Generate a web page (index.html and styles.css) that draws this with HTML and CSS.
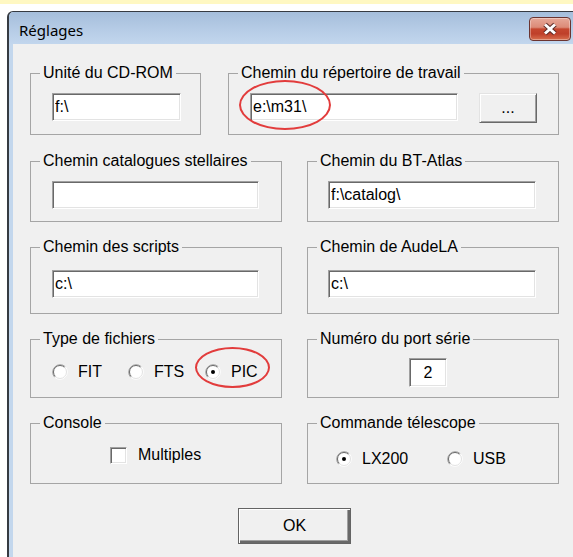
FILE: index.html
```html
<!DOCTYPE html>
<html lang="fr">
<head>
<meta charset="utf-8">
<title>Réglages</title>
<link rel="stylesheet" href="styles.css">
</head>
<body>
<div class="band"></div>
<div class="window">
  <div class="titlebar">
    <span class="title">Réglages</span>
    <button class="close" type="button" aria-label="Fermer">
      <svg width="18" height="14" viewBox="0 0 18 14" aria-hidden="true">
        <path d="M4 2.5L14 11.5M14 2.5L4 11.5" stroke="#5b2b27" stroke-width="5" fill="none"/>
        <path d="M4 2.5L14 11.5M14 2.5L4 11.5" stroke="#fff" stroke-width="3" fill="none"/>
      </svg>
    </button>
  </div>
  <div class="frame">
    <form class="panel">
      <div class="row-top">
        <fieldset class="group">
          <legend>Unité du CD-ROM</legend>
          <div class="body">
            <input class="field w-cd" value="f:\">
          </div>
        </fieldset>
        <fieldset class="group">
          <legend>Chemin du répertoire de travail</legend>
          <div class="body line">
            <input class="field w-work" value="e:\m31\">
            <button class="btn browse" type="button">...</button>
            <span class="mark mark-work"></span>
          </div>
        </fieldset>
      </div>

      <fieldset class="group">
        <legend>Chemin catalogues stellaires</legend>
        <div class="body">
          <input class="field w-left" value="">
        </div>
      </fieldset>
      <fieldset class="group">
        <legend>Chemin du BT-Atlas</legend>
        <div class="body pad-right">
          <input class="field w-right" value="f:\catalog\">
        </div>
      </fieldset>

      <fieldset class="group">
        <legend>Chemin des scripts</legend>
        <div class="body pad-r3">
          <input class="field w-left" value="c:\">
        </div>
      </fieldset>
      <fieldset class="group">
        <legend>Chemin de AudeLA</legend>
        <div class="body pad-right pad-r3">
          <input class="field w-right" value="c:\">
        </div>
      </fieldset>

      <fieldset class="group">
        <legend>Type de fichiers</legend>
        <div class="body opts types">
          <label class="opt">
            <svg class="radio" viewBox="0 0 16 16" aria-hidden="true">
              <circle cx="8" cy="8" r="7" fill="#fff"/>
              <path d="M2.7 13.3A7.5 7.5 0 0 1 13.3 2.7" fill="none" stroke="#a0a0a0"/>
              <path d="M13.3 2.7A7.5 7.5 0 0 1 2.7 13.3" fill="none" stroke="#fff"/>
              <path d="M3.4 12.6A6.5 6.5 0 0 1 12.6 3.4" fill="none" stroke="#696969"/>
              <path d="M12.6 3.4A6.5 6.5 0 0 1 3.4 12.6" fill="none" stroke="#e3e3e3"/>
            </svg>
            <span>FIT</span>
          </label>
          <label class="opt">
            <svg class="radio" viewBox="0 0 16 16" aria-hidden="true">
              <circle cx="8" cy="8" r="7" fill="#fff"/>
              <path d="M2.7 13.3A7.5 7.5 0 0 1 13.3 2.7" fill="none" stroke="#a0a0a0"/>
              <path d="M13.3 2.7A7.5 7.5 0 0 1 2.7 13.3" fill="none" stroke="#fff"/>
              <path d="M3.4 12.6A6.5 6.5 0 0 1 12.6 3.4" fill="none" stroke="#696969"/>
              <path d="M12.6 3.4A6.5 6.5 0 0 1 3.4 12.6" fill="none" stroke="#e3e3e3"/>
            </svg>
            <span>FTS</span>
          </label>
          <label class="opt">
            <svg class="radio" viewBox="0 0 16 16" aria-hidden="true">
              <circle cx="8" cy="8" r="7" fill="#fff"/>
              <path d="M2.7 13.3A7.5 7.5 0 0 1 13.3 2.7" fill="none" stroke="#a0a0a0"/>
              <path d="M13.3 2.7A7.5 7.5 0 0 1 2.7 13.3" fill="none" stroke="#fff"/>
              <path d="M3.4 12.6A6.5 6.5 0 0 1 12.6 3.4" fill="none" stroke="#696969"/>
              <path d="M12.6 3.4A6.5 6.5 0 0 1 3.4 12.6" fill="none" stroke="#e3e3e3"/>
              <circle cx="8" cy="8" r="2" fill="#000"/>
            </svg>
            <span>PIC</span>
          </label>
          <span class="mark mark-pic"></span>
        </div>
      </fieldset>
      <fieldset class="group">
        <legend>Numéro du port série</legend>
        <div class="body port">
          <input class="field w-port" value="2">
        </div>
      </fieldset>

      <fieldset class="group">
        <legend>Console</legend>
        <div class="body opts console">
          <label class="opt">
            <span class="check"></span>
            <span>Multiples</span>
          </label>
        </div>
      </fieldset>
      <fieldset class="group">
        <legend>Commande télescope</legend>
        <div class="body opts scope">
          <label class="opt">
            <svg class="radio" viewBox="0 0 16 16" aria-hidden="true">
              <circle cx="8" cy="8" r="7" fill="#fff"/>
              <path d="M2.7 13.3A7.5 7.5 0 0 1 13.3 2.7" fill="none" stroke="#a0a0a0"/>
              <path d="M13.3 2.7A7.5 7.5 0 0 1 2.7 13.3" fill="none" stroke="#fff"/>
              <path d="M3.4 12.6A6.5 6.5 0 0 1 12.6 3.4" fill="none" stroke="#696969"/>
              <path d="M12.6 3.4A6.5 6.5 0 0 1 3.4 12.6" fill="none" stroke="#e3e3e3"/>
              <circle cx="8" cy="8" r="2" fill="#000"/>
            </svg>
            <span>LX200</span>
          </label>
          <label class="opt">
            <svg class="radio" viewBox="0 0 16 16" aria-hidden="true">
              <circle cx="8" cy="8" r="7" fill="#fff"/>
              <path d="M2.7 13.3A7.5 7.5 0 0 1 13.3 2.7" fill="none" stroke="#a0a0a0"/>
              <path d="M13.3 2.7A7.5 7.5 0 0 1 2.7 13.3" fill="none" stroke="#fff"/>
              <path d="M3.4 12.6A6.5 6.5 0 0 1 12.6 3.4" fill="none" stroke="#696969"/>
              <path d="M12.6 3.4A6.5 6.5 0 0 1 3.4 12.6" fill="none" stroke="#e3e3e3"/>
            </svg>
            <span>USB</span>
          </label>
        </div>
      </fieldset>

      <button class="btn ok" type="button">OK</button>
    </form>
  </div>
</div>
</body>
</html>
```
FILE: styles.css
```css
html, body {
  margin: 0;
  overflow: hidden;
}

body {
  width: 573px;
  height: 557px;
  background: #fff;
  font-family: "Liberation Sans", Arial, sans-serif;
  font-size: 16px;
  color: #000;
}

/* pale strip along the top edge */
.band {
  height: 4px;
  background: #fff8c2;
}

/* dialog window */
.window {
  margin: 7px 0 0 7px;
  width: 572px;
  height: 560px;
  border-left: 2px solid #363b42;
  border-top: 1px solid #363b42;
  border-top-left-radius: 6px;
  background: #c3d7ed;
  display: flex;
  flex-direction: column;
}

.titlebar {
  height: 32px;
  flex: none;
  display: flex;
  justify-content: space-between;
  align-items: flex-start;
  background: linear-gradient(#a5bedb, #b6cce6 55%, #c2d6ed);
  border-top-left-radius: 5px;
}

.title {
  font-family: "Noto Sans", "Segoe UI", sans-serif;
  font-size: 15px;
  line-height: 20px;
  padding: 8px 0 0 10px;
  color: #000;
}

.close {
  box-sizing: border-box;
  width: 42px;
  height: 24px;
  margin: 5px 10px 0 0;
  padding: 0;
  display: flex;
  align-items: center;
  justify-content: center;
  border: 1px solid #6b3430;
  border-radius: 4px;
  background: linear-gradient(#e6a898 0%, #dc8b78 42%, #c5472f 50%, #bf3f2a 72%, #d8704f 100%);
  box-shadow: inset 0 0 0 1px rgba(255, 255, 255, 0.35);
}

.frame {
  flex: 1;
  padding-left: 4px;
  display: flex;
}

/* client area: two columns of group boxes */
.panel {
  flex: 1;
  background: #f0f0f0;
  padding: 20px 0 0 17px;
  display: grid;
  grid-template-columns: 252px 252px;
  grid-template-rows: 72px 70px 76px 68px 70px auto;
  column-gap: 25px;
  row-gap: 16px;
  align-content: start;
}

.row-top {
  grid-column: 1 / -1;
  display: grid;
  grid-template-columns: 171px 331px;
  column-gap: 27px;
  align-items: start;
}

.row-top .group {
  height: 71px;
}

.group {
  box-sizing: border-box;
  margin: 0;
  padding: 0;
  min-width: 0;
  border: 1px solid #a5a5a5;
}

.group legend {
  margin-left: 9px;
  padding: 0 3px;
  font-size: 16px;
  line-height: 18px;
}

.body {
  position: relative;
  padding: 11px 0 0 21px;
}

.pad-right {
  padding-left: 20px;
}

.pad-r3 {
  padding-top: 14px;
}

.line {
  display: flex;
  gap: 21px;
  align-items: flex-start;
}

/* sunken edit box */
.field {
  display: block;
  box-sizing: border-box;
  margin: 0;
  height: 28px;
  padding: 0 0 0 2px;
  border: 1px solid;
  border-color: #a0a0a0 #fff #fff #a0a0a0;
  box-shadow: inset 1px 1px 0 #696969, inset -1px -1px 0 #e3e3e3;
  background: #fff;
  font-family: "Liberation Sans", Arial, sans-serif;
  font-size: 16px;
  color: #000;
  outline: none;
}

.w-cd { width: 129px; }
.w-work { width: 208px; }
.w-left { width: 207px; }
.w-right { width: 208px; }

.port {
  padding: 10px 0 0 101px;
}

.w-port {
  width: 38px;
  height: 29px;
  padding: 0;
  text-align: center;
}

/* raised push button */
.btn {
  box-sizing: border-box;
  margin: 0;
  padding: 0;
  background: #f0f0f0;
  font-family: "Liberation Sans", Arial, sans-serif;
  font-size: 16px;
  color: #000;
  border: 1px solid;
  border-color: #e3e3e3 #696969 #696969 #e3e3e3;
  box-shadow: inset 1px 1px 0 #fff, inset -1px -1px 0 #a0a0a0;
}

.browse {
  width: 58px;
  height: 30px;
}

.ok {
  grid-column: 1 / -1;
  justify-self: center;
  width: 113px;
  height: 36px;
  margin-top: 8px;
  border: 1px solid #646464;
  box-shadow: inset 1px 1px 0 #fff, inset -2px -2px 0 #696969, inset -3px -3px 0 #a0a0a0;
}

/* radio / check rows */
.opts {
  display: flex;
  align-items: center;
  height: 18px;
}

.opt {
  display: flex;
  align-items: center;
  gap: 10px;
  line-height: 18px;
}

.radio {
  width: 16px;
  height: 16px;
  flex: none;
}

.types {
  padding-top: 15px;
}

.types .opt {
  width: 77px;
}

.types .opt:nth-child(2) {
  width: 78px;
}

.console {
  padding: 14px 0 0 79px;
}

.console .opt {
  gap: 11px;
}

.check {
  box-sizing: border-box;
  width: 17px;
  height: 17px;
  flex: none;
  border: 1px solid;
  border-color: #a0a0a0 #fff #fff #a0a0a0;
  box-shadow: inset 1px 1px 0 #696969, inset -1px -1px 0 #e3e3e3;
  background: #fff;
}

.scope {
  padding: 18px 0 0 28px;
}

.scope .opt {
  width: 125px;
}

/* red hand-drawn highlight rings */
.mark {
  position: absolute;
  box-sizing: border-box;
  border: 2px solid #e23c3c;
  border-radius: 50%;
  pointer-events: none;
}

.mark-work {
  left: 10px;
  top: -2px;
  width: 92px;
  height: 50px;
}

.mark-pic {
  left: 164px;
  top: -1px;
  width: 75px;
  height: 41px;
}
```
